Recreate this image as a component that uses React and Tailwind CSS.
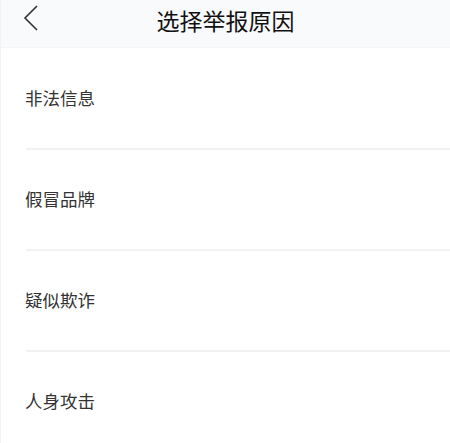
const reasons = ["非法信息", "假冒品牌", "疑似欺诈", "人身攻击"];

export default function App() {
  return (
    <div
      className="h-[443px] w-[450px] overflow-hidden border-l border-[#f2f2f2] bg-white"
      style={{ fontFamily: '"Noto Sans CJK SC", "Noto Sans", sans-serif' }}
    >
      <div className="relative flex h-[48px] items-start justify-center border-b border-[#f4f5f7] bg-[#f9fafc] pt-[9px]">
        <button className="absolute left-[22px] top-[4px] text-[#333]">
          <svg width="16" height="28" viewBox="0 0 16 28" fill="none">
            <path d="M14 2 L2 14 L14 26" stroke="#333" strokeWidth="1.6" />
          </svg>
        </button>
        <h1 className="text-[23px] leading-none text-[#111]">选择举报原因</h1>
      </div>
      <ul className="pt-[1px]">
        {reasons.map((r) => (
          <li key={r} className="ml-[25px] flex h-[101px] items-center border-b-2 border-[#f2f2f2] text-[17.5px] text-[#333]">
            <span className="-ml-px">{r}</span>
          </li>
        ))}
      </ul>
    </div>
  );
}
